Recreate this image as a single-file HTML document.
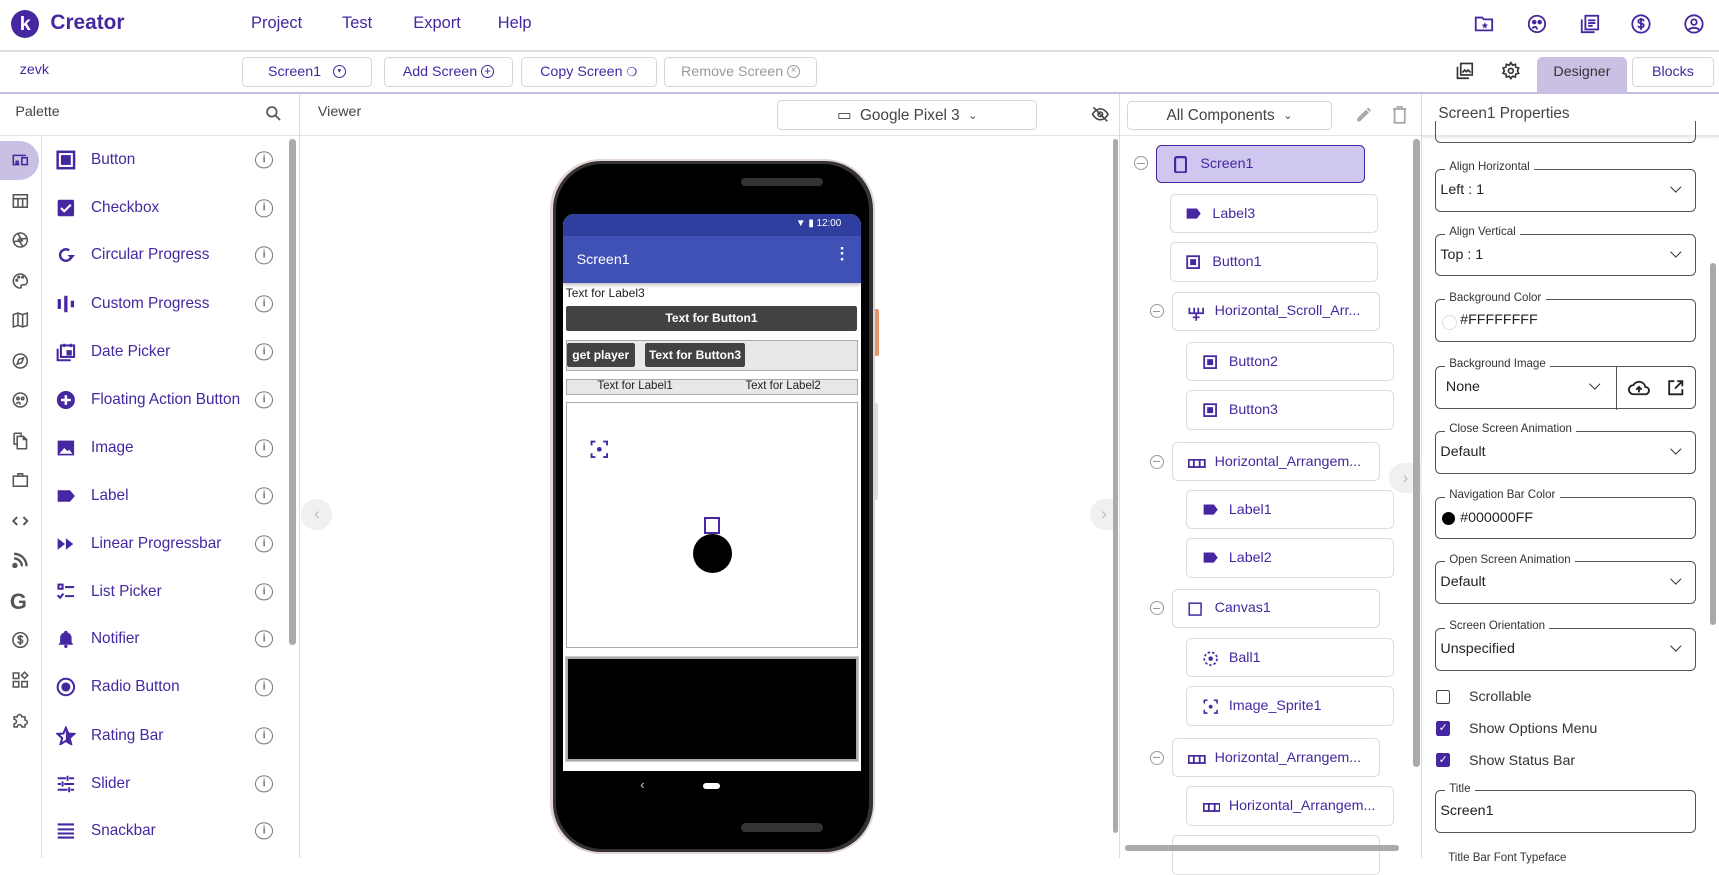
<!DOCTYPE html>
<html><head><meta charset="utf-8"><style>
html{zoom:1.0963}
body{margin:0;width:1568px;height:783px;overflow:hidden;position:relative;font-family:"Liberation Sans",sans-serif;background:#fff;color:#4527a0}
.a{position:absolute}
.t{position:absolute;white-space:nowrap}
.btn{position:absolute;border:1px solid #d8d8d8;border-radius:4px;box-sizing:border-box;font-size:13px;display:flex;align-items:center;justify-content:center;color:#4527a0}
.pi{position:absolute;left:83px;font-size:14px;transform:translateY(-50%)}
.pic{position:absolute;left:51px;width:18px;height:18px;transform:translateY(-50%)}
.inf{position:absolute;left:233px;width:14px;height:14px;border:1.5px solid #777;border-radius:50%;transform:translateY(-50%);font-size:10px;color:#777;text-align:center;line-height:14px;font-weight:bold}
.ri{position:absolute;left:10px;width:17px;height:17px;transform:translateY(-50%)}
.ti{position:absolute;border:1px solid #ddd;border-radius:5px;box-sizing:border-box;height:36px;width:190px;font-size:13px;display:flex;align-items:center;padding-left:38px}
.ti svg{position:absolute;left:14px;top:11px}
.cc{position:absolute;width:11px;height:11px;border:1.3px solid #999;border-radius:50%;transform:translate(-50%,-50%)}
.cc:after{content:"";position:absolute;left:2px;right:2px;top:5px;height:1.3px;background:#999}
.f{position:absolute;left:1309px;width:238px;height:39px;border:1px solid #555;border-radius:5px;box-sizing:border-box;color:#222;font-size:13px}
.f .l{position:absolute;top:-8px;left:8px;background:#fff;padding:0 4px;font-size:10.5px;color:#333}
.f .v{position:absolute;left:4px;top:11px}
.f .ch{position:absolute;right:14px;top:12px;width:6px;height:6px;border-right:1.5px solid #333;border-bottom:1.5px solid #333;transform:rotate(45deg)}
.cb{position:absolute;left:1310px;width:13px;height:13px;box-sizing:border-box;border-radius:2px}
.cbt{position:absolute;left:1340px;font-size:13px;color:#333;transform:translateY(-50%)}
</style></head><body>
<div class="a" style="left:0;top:46px;width:1568px;height:1px;background:#ddd"></div>
<div class="a" style="left:10px;top:9px;width:26px;height:26px;border-radius:50%;background:#4527a0;color:#fff;font-weight:bold;font-size:18px;text-align:center;line-height:26px">k</div>
<div class="t" style="left:46px;top:10px;font-size:19px;font-weight:bold;color:#4527a0">Creator</div>
<div class="t" style="left:229px;top:13px;font-size:15px">Project</div>
<div class="t" style="left:312px;top:13px;font-size:15px">Test</div>
<div class="t" style="left:377px;top:13px;font-size:15px">Export</div>
<div class="t" style="left:454px;top:13px;font-size:15px">Help</div>
<svg class="a" style="left:1344px;top:12px" width="20" height="20" viewBox="0 0 24 24" fill="none" stroke="#4527a0" stroke-width="2"><path d="M3 5h7l2 2h9v12H3z"/><path d="M13 10l1 2.5 2.5.3-2 1.6.6 2.6-2.1-1.4-2.1 1.4.6-2.6-2-1.6 2.5-.3z" fill="#4527a0" stroke="none"/></svg>
<svg class="a" style="left:1392px;top:12px" width="20" height="20" viewBox="0 0 24 24" fill="none" stroke="#4527a0" stroke-width="2"><circle cx="12" cy="12" r="9"/><circle cx="9" cy="10" r="1.5" fill="#4527a0"/><circle cx="15" cy="10" r="1.5" fill="#4527a0"/><path d="M7 17c2-3 5-2 5 1" /></svg>
<svg class="a" style="left:1440px;top:12px" width="20" height="20" viewBox="0 0 24 24" fill="none" stroke="#4527a0" stroke-width="2"><rect x="7" y="3" width="14" height="15"/><path d="M3 7v14h14M10 8h8M10 11h8M10 14h5"/></svg>
<svg class="a" style="left:1487px;top:12px" width="20" height="20" viewBox="0 0 24 24" fill="none" stroke="#4527a0" stroke-width="2"><circle cx="12" cy="12" r="9.5"/><path d="M15 9c0-1.5-1.5-2-3-2s-3 .7-3 2 1.5 2 3 2.3 3 1 3 2.4-1.5 2.3-3 2.3-3-.7-3-2M12 5.5v13"/></svg>
<svg class="a" style="left:1535px;top:12px" width="20" height="20" viewBox="0 0 24 24" fill="none" stroke="#4527a0" stroke-width="2"><circle cx="12" cy="12" r="9.5"/><circle cx="12" cy="10" r="3"/><path d="M6 18.5c3-3 9-3 12 0"/></svg>
<div class="a" style="left:0;top:84px;width:1568px;height:2px;background:#c5bde6"></div>
<div class="t" style="left:18px;top:57px;font-size:13px">zevk</div>
<div class="btn" style="left:221px;top:52px;width:118px;height:27px">Screen1 &nbsp;&nbsp;<span style="display:inline-block;width:10px;height:10px;border:1.3px solid #4527a0;border-radius:50%;font-size:7px;line-height:10px;text-align:center">▾</span></div>
<div class="btn" style="left:350px;top:52px;width:118px;height:27px">Add Screen&nbsp;<span style="display:inline-block;width:10px;height:10px;border:1.3px solid #4527a0;border-radius:50%;font-size:11px;line-height:10px;text-align:center">+</span></div>
<div class="btn" style="left:475px;top:52px;width:124px;height:27px">Copy Screen&nbsp;<span style="font-size:11px">❍</span></div>
<div class="btn" style="left:606px;top:52px;width:139px;height:27px;color:#999">Remove Screen&nbsp;<span style="display:inline-block;width:10px;height:10px;border:1.3px solid #999;border-radius:50%;font-size:9px;line-height:10px;text-align:center">×</span></div>
<svg class="a" style="left:1327px;top:56px" width="18" height="18" viewBox="0 0 24 24" fill="none" stroke="#333" stroke-width="2"><rect x="7" y="3" width="14" height="14"/><path d="M3 7v14h14M9 14l3-3 2 2 2-2 3 3"/></svg>
<svg class="a" style="left:1369px;top:56px" width="18" height="18" viewBox="0 0 24 24" fill="none" stroke="#333" stroke-width="2"><circle cx="12" cy="12" r="3"/><path d="M12 2l2 3 3.5-1 .5 3.5 3.5 1-1.5 3.5 1.5 3-3.5 1-.5 3.5-3.5-1-2 3-2-3-3.5 1-.5-3.5-3.5-1 1.5-3-1.5-3.5 3.5-1 .5-3.5 3.5 1z"/></svg>
<div class="a" style="left:1402px;top:52px;width:82px;height:33px;background:#c9c0e4;border-radius:5px 5px 0 0;font-size:13px;color:#333;text-align:center;line-height:28px">Designer</div>
<div class="btn" style="left:1489px;top:52px;width:74px;height:27px">Blocks</div>
<div class="t" style="left:14px;top:95px;font-size:13px;color:#444">Palette</div>
<svg class="a" style="left:242px;top:96px" width="15" height="15" viewBox="0 0 24 24" fill="none" stroke="#555" stroke-width="2.5"><circle cx="10" cy="10" r="7"/><path d="M15 15l7 7"/></svg>
<div class="a" style="left:0;top:123px;width:1568px;height:1px;background:#e3e3e3"></div>
<div class="a" style="left:273px;top:86px;width:1px;height:697px;background:#ddd"></div>
<div class="a" style="left:37px;top:124px;width:1px;height:659px;background:#ddd"></div>
<div class="a" style="left:0;top:129px;width:36px;height:35px;background:#c9c0e4;border-radius:0 18px 18px 0"></div>
<svg class="ri" style="top:146px" viewBox="0 0 24 24" fill="none" stroke="#4527a0" stroke-width="2"><path d="M3 18V6h16M2 18h9M14 9h7v9h-7z"/><circle cx="8" cy="15" r="1.5"/></svg>
<svg class="ri" style="top:183px" viewBox="0 0 24 24" fill="none" stroke="#555" stroke-width="2"><rect x="3" y="4" width="18" height="16"/><path d="M3 9h18M9 9v11M15 9v11"/></svg>
<svg class="ri" style="top:219px" viewBox="0 0 24 24" fill="none" stroke="#555" stroke-width="2"><circle cx="12" cy="12" r="9"/><path d="M9 4l6 10M20 10l-11 1M15 20L9 11M4 14l11-1"/></svg>
<svg class="ri" style="top:256px" viewBox="0 0 24 24" fill="none" stroke="#555" stroke-width="2"><path d="M12 3a9 9 0 100 18c1 0 1.5-1 1-2s0-2 1.5-2H17a4 4 0 004-4c0-5-4-10-9-10z"/><circle cx="7.5" cy="11" r="1"/><circle cx="10" cy="7" r="1"/><circle cx="15" cy="7" r="1"/></svg>
<svg class="ri" style="top:292px" viewBox="0 0 24 24" fill="none" stroke="#555" stroke-width="2"><path d="M3 5l6-2 6 2 6-2v16l-6 2-6-2-6 2zM9 3v16M15 5v16"/></svg>
<svg class="ri" style="top:329px" viewBox="0 0 24 24" fill="none" stroke="#555" stroke-width="2"><circle cx="12" cy="12" r="9"/><path d="M16 8l-2 6-6 2 2-6z"/></svg>
<svg class="ri" style="top:365px" viewBox="0 0 24 24" fill="none" stroke="#555" stroke-width="2"><circle cx="12" cy="12" r="9"/><circle cx="9" cy="10" r="1.5"/><circle cx="15" cy="10" r="1.5"/><path d="M7 17c2-3 5-2 5 1"/></svg>
<svg class="ri" style="top:402px" viewBox="0 0 24 24" fill="none" stroke="#555" stroke-width="2"><path d="M4 2h9v4M8 6h8l4 4v12H8zM16 6v4h4M4 2v14h4"/></svg>
<svg class="ri" style="top:438px" viewBox="0 0 24 24" fill="none" stroke="#555" stroke-width="2"><rect x="3" y="7" width="18" height="13"/><path d="M9 7V4h6v3"/></svg>
<svg class="ri" style="top:475px" viewBox="0 0 24 24" fill="none" stroke="#555" stroke-width="2.5"><path d="M8 7l-5 5 5 5M16 7l5 5-5 5"/></svg>
<svg class="ri" style="top:511px" viewBox="0 0 24 24" fill="none" stroke="#555" stroke-width="3"><path d="M4 4a16 16 0 0116 16M4 10a10 10 0 0110 10"/><circle cx="5" cy="19" r="2" fill="#555"/></svg>
<div class="t" style="left:9px;top:537px;font-size:20px;color:#555;font-weight:bold">G</div>
<svg class="ri" style="top:584px" viewBox="0 0 24 24" fill="none" stroke="#555" stroke-width="2"><circle cx="12" cy="12" r="9.5"/><path d="M15 9c0-1.5-1.5-2-3-2s-3 .7-3 2 1.5 2 3 2.3 3 1 3 2.4-1.5 2.3-3 2.3-3-.7-3-2M12 5.5v13"/></svg>
<svg class="ri" style="top:620px" viewBox="0 0 24 24" fill="none" stroke="#555" stroke-width="2"><rect x="3" y="3" width="7" height="7"/><rect x="3" y="14" width="7" height="7"/><rect x="14" y="14" width="7" height="7"/><path d="M17.5 2l4 4-4 4-4-4z"/></svg>
<svg class="ri" style="top:657px" viewBox="0 0 24 24" fill="none" stroke="#555" stroke-width="2"><path d="M4 8h4a3 3 0 016 0h4v4a3 3 0 010 6v3h-4a3 3 0 00-6 0H4v-4a3 3 0 000-6z"/></svg>

<svg class="pic" style="top:146px" viewBox="0 0 24 24"><rect x="2" y="2" width="20" height="20" fill="none" stroke="#4527a0" stroke-width="3"/><rect x="6" y="6" width="12" height="12" fill="#4527a0"/></svg>
<svg class="pic" style="top:190px" viewBox="0 0 24 24"><rect x="2" y="2" width="20" height="20" rx="2" fill="#4527a0"/><path d="M6 12l4 4 8-8" stroke="#fff" stroke-width="2.5" fill="none"/></svg>
<svg class="pic" style="top:233px" viewBox="0 0 24 24" fill="none" stroke="#4527a0" stroke-width="3"><path d="M19 12a7 7 0 11-3-5.7"/><path d="M14 12l5 5 4-5z" fill="#4527a0" stroke="none"/></svg>
<svg class="pic" style="top:277px" viewBox="0 0 24 24" fill="#4527a0"><rect x="2" y="6" width="4" height="12"/><rect x="10" y="2" width="4" height="20"/><rect x="18" y="8" width="4" height="8"/></svg>
<svg class="pic" style="top:321px" viewBox="0 0 24 24" fill="none" stroke="#4527a0" stroke-width="2.5"><rect x="6" y="4" width="16" height="14"/><path d="M2 8v14h16M10 2v4M18 2v4"/><rect x="14" y="11" width="4" height="4" fill="#4527a0"/></svg>
<svg class="pic" style="top:365px" viewBox="0 0 24 24"><circle cx="12" cy="12" r="11" fill="#4527a0"/><path d="M12 6v12M6 12h12" stroke="#fff" stroke-width="3"/></svg>
<svg class="pic" style="top:409px" viewBox="0 0 24 24"><rect x="2" y="3" width="20" height="18" fill="#4527a0"/><path d="M4 19l6-7 4 4 2-2 4 5z" fill="#fff"/></svg>
<svg class="pic" style="top:452px" viewBox="0 0 24 24"><path d="M2 5h15l6 7-6 7H2z" fill="#4527a0"/></svg>
<svg class="pic" style="top:496px" viewBox="0 0 24 24" fill="#4527a0"><path d="M2 5l9 7-9 7zM12 5l9 7-9 7z"/></svg>
<svg class="pic" style="top:540px" viewBox="0 0 24 24" fill="none" stroke="#4527a0" stroke-width="2.5"><rect x="3" y="3" width="5" height="5"/><path d="M11 6h11M11 17h11M2 16l3 3 4-5"/></svg>
<svg class="pic" style="top:583px" viewBox="0 0 24 24" fill="#4527a0"><path d="M12 2a2 2 0 012 2 7 7 0 015 7v5l2 3H3l2-3v-5a7 7 0 015-7 2 2 0 012-2z"/><circle cx="12" cy="21" r="2"/></svg>
<svg class="pic" style="top:627px" viewBox="0 0 24 24"><circle cx="12" cy="12" r="10" fill="none" stroke="#4527a0" stroke-width="2.5"/><circle cx="12" cy="12" r="5.5" fill="#4527a0"/></svg>
<svg class="pic" style="top:671px" viewBox="0 0 24 24"><path d="M12 2l3 7 7 .5-5.5 5 2 7.5-6.5-4-6.5 4 2-7.5L2 9.5 9 9z" fill="none" stroke="#4527a0" stroke-width="2.5"/><path d="M12 2l3 7 7 .5-5.5 5 2 7.5-6.5-4z" fill="#4527a0"/></svg>
<svg class="pic" style="top:715px" viewBox="0 0 24 24" stroke="#4527a0" stroke-width="2.5"><path d="M2 5h10M16 5h6M14 2v6M2 12h4M10 12h12M8 9v6M2 19h12M18 19h4M16 16v6"/></svg>
<svg class="pic" style="top:758px" viewBox="0 0 24 24" stroke="#4527a0" stroke-width="2.5"><path d="M2 4h20M2 10h20M2 15h20M2 20h20"/></svg>
<div class="pi" style="top:146px">Button</div><div class="inf" style="top:146px">i</div>
<div class="pi" style="top:190px">Checkbox</div><div class="inf" style="top:190px">i</div>
<div class="pi" style="top:233px">Circular Progress</div><div class="inf" style="top:233px">i</div>
<div class="pi" style="top:277px">Custom Progress</div><div class="inf" style="top:277px">i</div>
<div class="pi" style="top:321px">Date Picker</div><div class="inf" style="top:321px">i</div>
<div class="pi" style="top:365px">Floating Action Button</div><div class="inf" style="top:365px">i</div>
<div class="pi" style="top:409px">Image</div><div class="inf" style="top:409px">i</div>
<div class="pi" style="top:452px">Label</div><div class="inf" style="top:452px">i</div>
<div class="pi" style="top:496px">Linear Progressbar</div><div class="inf" style="top:496px">i</div>
<div class="pi" style="top:540px">List Picker</div><div class="inf" style="top:540px">i</div>
<div class="pi" style="top:583px">Notifier</div><div class="inf" style="top:583px">i</div>
<div class="pi" style="top:627px">Radio Button</div><div class="inf" style="top:627px">i</div>
<div class="pi" style="top:671px">Rating Bar</div><div class="inf" style="top:671px">i</div>
<div class="pi" style="top:715px">Slider</div><div class="inf" style="top:715px">i</div>
<div class="pi" style="top:758px">Snackbar</div><div class="inf" style="top:758px">i</div>
<div class="a" style="left:264px;top:127px;width:6px;height:461px;background:#aaa;border-radius:3px"></div>

<div class="t" style="left:290px;top:95px;font-size:13px;color:#444">Viewer</div>
<div class="btn" style="left:709px;top:91px;width:237px;height:28px;color:#444;font-size:14px">▭&nbsp; Google Pixel 3 &nbsp;<span style="font-size:10px">⌄</span></div>
<svg class="a" style="left:995px;top:96px" width="17" height="17" viewBox="0 0 24 24" fill="none" stroke="#444" stroke-width="2"><path d="M2 12s4-7 10-7 10 7 10 7-4 7-10 7S2 12 2 12z"/><circle cx="12" cy="12" r="3"/><path d="M3 3l18 18"/></svg>
<div class="a" style="left:1021px;top:86px;width:1px;height:697px;background:#ddd"></div>
<div class="a" style="left:275px;top:455px;width:28px;height:28px;border-radius:50%;background:#f0f0f0;color:#bbb;text-align:center;line-height:28px;font-size:15px">‹</div>
<div class="a" style="left:994px;top:455px;width:26px;height:28px;border-radius:14px 0 0 14px;background:#f0f0f0;color:#bbb;text-align:center;line-height:28px;font-size:15px">›</div>
<div class="a" style="left:1015px;top:127px;width:5px;height:633px;background:#aaa;border-radius:3px"></div>
<div class="a" style="left:798px;top:282px;width:4px;height:43px;background:#e8956a;border-radius:0 2px 2px 0"></div>
<div class="a" style="left:798px;top:368px;width:3px;height:88px;background:#ddd;border-radius:0 2px 2px 0"></div>
<div class="a" style="left:502px;top:145px;width:296px;height:634px;border-radius:46px;background:#e3d5d1"></div>
<div class="a" style="left:504px;top:147px;width:292px;height:630px;border-radius:44px;background:#333"></div>
<div class="a" style="left:507px;top:150px;width:286px;height:624px;border-radius:42px;background:#000"></div>
<div class="a" style="left:676px;top:162px;width:75px;height:8px;border-radius:4px;background:#333"></div>
<div class="a" style="left:676px;top:751px;width:75px;height:8px;border-radius:4px;background:#333"></div>
<div class="a" style="left:514px;top:195px;width:271px;height:508px;background:#fff;border-radius:10px 10px 0 0;overflow:hidden">
 <div class="a" style="left:0;top:0;width:271px;height:20px;background:#303f9f"></div>
 <div class="t" style="left:212px;top:4px;font-size:9px;color:#fff">▼ ▮ 12:00</div>
 <div class="a" style="left:0;top:20px;width:271px;height:43px;background:#3f51b5;box-shadow:0 2px 4px rgba(0,0,0,.3)"></div>
 <div class="t" style="left:12px;top:35px;font-size:13px;color:#fff">Screen1</div>
 <div class="t" style="left:252px;top:30px;font-size:15px;color:#fff;font-weight:bold;line-height:5px">·<br>·<br>·</div>
 <div class="t" style="left:2px;top:66px;font-size:11px;color:#222">Text for Label3</div>
 <div class="a" style="left:2px;top:84px;width:266px;height:23px;background:#424242;border-radius:2px;color:#fff;font-size:11px;font-weight:bold;text-align:center;line-height:23px">Text for Button1</div>
 <div class="a" style="left:2px;top:115px;width:267px;height:28px;background:#e8e8e8;border:1px solid #aaa;box-sizing:border-box"></div>
 <div class="a" style="left:3px;top:118px;width:62px;height:22px;background:#424242;border-radius:2px;color:#fff;font-size:11px;font-weight:bold;text-align:center;line-height:22px">get player</div>
 <div class="a" style="left:74px;top:118px;width:92px;height:22px;background:#424242;border-radius:2px;color:#fff;font-size:11px;font-weight:bold;text-align:center;line-height:22px">Text for Button3</div>
 <div class="a" style="left:2px;top:151px;width:267px;height:14px;background:#e8e8e8;border:1px solid #aaa;box-sizing:border-box;font-size:10.5px;color:#222;line-height:12px"><span class="t" style="left:28px">Text for Label1</span><span class="t" style="left:163px">Text for Label2</span></div>
 <div class="a" style="left:2px;top:172px;width:267px;height:224px;border:1px solid #aaa;box-sizing:border-box"></div>
 <svg class="a" style="left:24px;top:206px" width="17" height="17" viewBox="0 0 24 24" fill="none" stroke="#4527a0" stroke-width="2.5"><path d="M2 7V2h5M17 2h5v5M22 17v5h-5M7 22H2v-5"/><circle cx="12" cy="12" r="3" fill="#4527a0" stroke="none"/></svg>
 <div class="a" style="left:128px;top:277px;width:15px;height:15px;border:2px solid #4527a0;box-sizing:border-box"></div>
 <div class="a" style="left:118px;top:292px;width:36px;height:36px;border-radius:50%;background:#000"></div>
 <div class="a" style="left:2px;top:404px;width:267px;height:95px;background:#000;border:2px solid #aaa;box-sizing:border-box;outline:1px solid #ccc"></div>
</div>
<div class="t" style="left:584px;top:709px;font-size:12px;color:#ccc">‹</div>
<div class="a" style="left:641px;top:714px;width:16px;height:6px;border-radius:3px;background:#fff"></div>

<div class="btn" style="left:1028px;top:92px;width:187px;height:27px;color:#444;font-size:14px">All Components &nbsp;<span style="font-size:10px">⌄</span></div>
<svg class="a" style="left:1236px;top:97px" width="16" height="16" viewBox="0 0 24 24" fill="#aaa"><path d="M3 17v4h4L19 9l-4-4zM16 4l4 4 2-2-4-4z"/></svg>
<svg class="a" style="left:1270px;top:97px" width="14" height="16" viewBox="0 0 20 24" fill="none" stroke="#aaa" stroke-width="2.5"><path d="M1 4h18M7 4V1h6v3M3 4v19h14V4"/></svg>
<div class="a" style="left:1296px;top:86px;width:1px;height:697px;background:#ddd"></div>
<div class="cc" style="left:1041px;top:149px"></div>
<div class="ti" style="left:1054px;top:132px;width:191px;height:35px;background:#d0c7f0;border-color:#4527a0;padding-left:40px"><svg width="12" height="16" viewBox="0 0 12 16" style="left:16px;top:9px"><rect x="1" y="1" width="10" height="14" rx="1.5" fill="none" stroke="#4527a0" stroke-width="2"/></svg>Screen1</div>
<div class="ti" style="left:1067px;top:177px"><svg width="14" height="12" viewBox="0 0 24 20"><path d="M1 2h16l6 8-6 8H1z" fill="#4527a0"/></svg>Label3</div>
<div class="ti" style="left:1067px;top:221px"><svg width="13" height="13" viewBox="0 0 24 24"><rect x="2" y="2" width="20" height="20" fill="none" stroke="#4527a0" stroke-width="3"/><rect x="7" y="7" width="10" height="10" fill="#4527a0"/></svg>Button1</div>
<div class="cc" style="left:1055px;top:284px"></div>
<div class="ti" style="left:1069px;top:266px"><svg width="15" height="15" viewBox="0 0 24 24" stroke="#4527a0" stroke-width="2.5" fill="none"><path d="M2 4v8h20V4M9 4v8M15 4v8M12 13v10M7 18h10"/></svg>Horizontal_Scroll_Arr...</div>
<div class="ti" style="left:1082px;top:312px"><svg width="13" height="13" viewBox="0 0 24 24"><rect x="2" y="2" width="20" height="20" fill="none" stroke="#4527a0" stroke-width="3"/><rect x="7" y="7" width="10" height="10" fill="#4527a0"/></svg>Button2</div>
<div class="ti" style="left:1082px;top:356px"><svg width="13" height="13" viewBox="0 0 24 24"><rect x="2" y="2" width="20" height="20" fill="none" stroke="#4527a0" stroke-width="3"/><rect x="7" y="7" width="10" height="10" fill="#4527a0"/></svg>Button3</div>
<div class="cc" style="left:1055px;top:421px"></div>
<div class="ti" style="left:1069px;top:403px"><svg width="16" height="8" viewBox="0 0 24 12" style="top:15px"><rect x="1" y="1" width="22" height="10" fill="none" stroke="#4527a0" stroke-width="2.5"/><path d="M8 1v10M16 1v10" stroke="#4527a0" stroke-width="2.5"/></svg>Horizontal_Arrangem...</div>
<div class="ti" style="left:1082px;top:447px"><svg width="14" height="12" viewBox="0 0 24 20"><path d="M1 2h16l6 8-6 8H1z" fill="#4527a0"/></svg>Label1</div>
<div class="ti" style="left:1082px;top:491px"><svg width="14" height="12" viewBox="0 0 24 20"><path d="M1 2h16l6 8-6 8H1z" fill="#4527a0"/></svg>Label2</div>
<div class="cc" style="left:1055px;top:555px"></div>
<div class="ti" style="left:1069px;top:537px"><svg width="13" height="13" viewBox="0 0 24 24"><rect x="2" y="2" width="20" height="20" fill="none" stroke="#4527a0" stroke-width="2.5"/></svg>Canvas1</div>
<div class="ti" style="left:1082px;top:582px"><svg width="14" height="14" viewBox="0 0 24 24"><circle cx="12" cy="12" r="10" fill="none" stroke="#4527a0" stroke-width="2.5" stroke-dasharray="4 3"/><circle cx="12" cy="12" r="3.5" fill="#4527a0"/></svg>Ball1</div>
<div class="ti" style="left:1082px;top:626px"><svg width="14" height="14" viewBox="0 0 24 24" fill="none" stroke="#4527a0" stroke-width="2.5"><path d="M2 7V2h5M17 2h5v5M22 17v5h-5M7 22H2v-5"/><circle cx="12" cy="12" r="3" fill="#4527a0" stroke="none"/></svg>Image_Sprite1</div>
<div class="cc" style="left:1055px;top:691px"></div>
<div class="ti" style="left:1069px;top:673px"><svg width="16" height="8" viewBox="0 0 24 12" style="top:15px"><rect x="1" y="1" width="22" height="10" fill="none" stroke="#4527a0" stroke-width="2.5"/><path d="M8 1v10M16 1v10" stroke="#4527a0" stroke-width="2.5"/></svg>Horizontal_Arrangem...</div>
<div class="ti" style="left:1082px;top:717px"><svg width="16" height="8" viewBox="0 0 24 12" style="top:15px"><rect x="1" y="1" width="22" height="10" fill="none" stroke="#4527a0" stroke-width="2.5"/><path d="M8 1v10M16 1v10" stroke="#4527a0" stroke-width="2.5"/></svg>Horizontal_Arrangem...</div>
<div class="ti" style="left:1069px;top:762px"></div>
<div class="a" style="left:1267px;top:422px;width:30px;height:28px;border-radius:14px 0 0 14px;background:#f0f0f0;color:#bbb;text-align:center;line-height:28px;font-size:15px">›</div>
<div class="a" style="left:1289px;top:127px;width:6px;height:573px;background:#aaa;border-radius:3px"></div>
<div class="a" style="left:1026px;top:771px;width:250px;height:5px;background:#aaa;border-radius:3px"></div>

<div class="t" style="left:1312px;top:96px;font-size:14px;color:#444">Screen1 Properties</div>
<div class="a" style="left:1297px;top:123px;width:271px;height:2px;background:#e8e8e8;box-shadow:0 1px 3px rgba(0,0,0,.1)"></div>
<div class="a" style="left:1309px;top:110px;width:238px;height:20px;border:1px solid #555;border-top:none;border-radius:0 0 5px 5px;box-sizing:border-box"></div>
<div class="f" style="top:154px"><span class="l">Align Horizontal</span><span class="v">Left : 1</span><span class="ch"></span></div>
<div class="f" style="top:213px"><span class="l">Align Vertical</span><span class="v">Top : 1</span><span class="ch"></span></div>
<div class="f" style="top:273px"><span class="l">Background Color</span><span class="a" style="left:5px;top:13px;width:12px;height:12px;border:1px solid #ddd;border-radius:50%"></span><span class="v" style="left:22px">#FFFFFFFF</span></div>
<div class="f" style="top:334px"><span class="l">Background Image</span><span class="v" style="left:9px">None</span><span class="ch" style="right:88px"></span><span class="a" style="left:164px;top:0;width:1px;height:39px;background:#555"></span>
<svg class="a" style="left:175px;top:10px" width="20" height="18" viewBox="0 0 24 20" fill="none" stroke="#222" stroke-width="2"><path d="M6 17a5 5 0 010-10 7 7 0 0113 2 4 4 0 010 8z"/><path d="M12 15V9M9 12l3-3 3 3"/></svg>
<svg class="a" style="left:211px;top:11px" width="16" height="16" viewBox="0 0 24 24" fill="none" stroke="#222" stroke-width="2.5"><path d="M10 3H3v18h18v-7M14 3h7v7M21 3L11 13"/></svg></div>
<div class="f" style="top:393px"><span class="l">Close Screen Animation</span><span class="v">Default</span><span class="ch"></span></div>
<div class="f" style="top:453px"><span class="l">Navigation Bar Color</span><span class="a" style="left:5px;top:13px;width:12px;height:12px;background:#000;border-radius:50%"></span><span class="v" style="left:22px">#000000FF</span></div>
<div class="f" style="top:512px"><span class="l">Open Screen Animation</span><span class="v">Default</span><span class="ch"></span></div>
<div class="f" style="top:573px"><span class="l">Screen Orientation</span><span class="v">Unspecified</span><span class="ch"></span></div>
<div class="cb" style="top:629px;border:1.5px solid #444"></div><div class="cbt" style="top:636px">Scrollable</div>
<div class="cb" style="top:658px;background:#4527a0;color:#fff;font-size:10px;text-align:center;line-height:13px">✓</div><div class="cbt" style="top:665px">Show Options Menu</div>
<div class="cb" style="top:687px;background:#4527a0;color:#fff;font-size:10px;text-align:center;line-height:13px">✓</div><div class="cbt" style="top:694px">Show Status Bar</div>
<div class="f" style="top:721px"><span class="l">Title</span><span class="v">Screen1</span></div>
<div class="t" style="left:1321px;top:777px;font-size:10.5px;color:#333">Title Bar Font Typeface</div>
<div class="a" style="left:1560px;top:240px;width:5px;height:330px;background:#aaa;border-radius:3px"></div>
</body></html>
